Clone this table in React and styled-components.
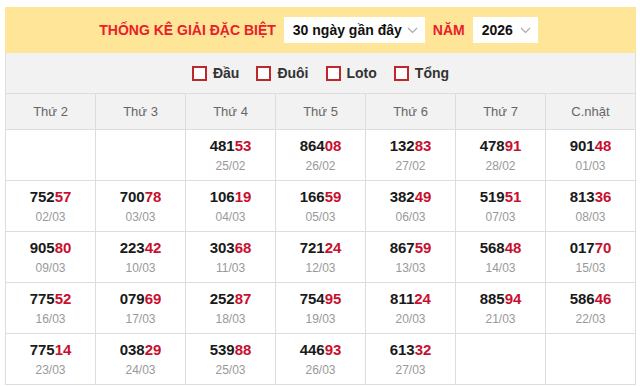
import React from "react";
import styled, { createGlobalStyle } from "styled-components";

const GlobalStyle = createGlobalStyle`
  body {
    margin: 0;
    background: #fff;
    font-family: "Liberation Sans", Arial, sans-serif;
  }
`;

const Wrapper = styled.div`
  width: 631px;
  margin: 7px 0 0 5px;
`;

const TitleBar = styled.div`
  height: 46px;
  background: #ffe598;
  display: flex;
  align-items: center;
  justify-content: center;
  gap: 8px;
  padding-right: 4px;
`;

const Title = styled.span`
  color: #e8202a;
  font-weight: bold;
  font-size: 14px;
`;

const Select = styled.div`
  height: 26px;
  width: ${(p) => p.w}px;
  box-sizing: border-box;
  background: #fff;
  display: flex;
  align-items: center;
  justify-content: space-between;
  padding: 0 7px 0 9px;
  font-size: 14px;
  font-weight: bold;
  color: #111;
`;

const FilterBar = styled.div`
  height: 40px;
  background: #f2f2f2;
  border-left: 1px solid #ddd;
  border-right: 1px solid #ddd;
  border-bottom: 1px solid #ddd;
  display: flex;
  align-items: center;
  justify-content: center;
  gap: 17px;
`;

const Check = styled.label`
  display: flex;
  align-items: center;
  gap: 6px;
  font-size: 14px;
  font-weight: bold;
  color: #333;
`;

const Box = styled.span`
  width: 15px;
  height: 15px;
  box-sizing: border-box;
  border: 2px solid #c0272d;
  background: #fff;
`;

const Grid = styled.div`
  display: grid;
  grid-template-columns: repeat(7, 90px);
  border-left: 1px solid #ddd;
`;

const HeadCell = styled.div`
  height: 35px;
  background: #f2f2f2;
  border-right: 1px solid #ddd;
  border-bottom: 1px solid #ddd;
  display: flex;
  align-items: center;
  justify-content: center;
  font-size: 13px;
  color: #666;
`;

const Cell = styled.div`
  height: 50px;
  border-right: 1px solid #ddd;
  border-bottom: 1px solid #ddd;
  display: flex;
  flex-direction: column;
  align-items: center;
  justify-content: center;
`;

const Num = styled.div`
  font-size: 15px;
  line-height: 18px;
  font-weight: bold;
  color: #1a1a1a;
  span {
    color: #c8102e;
  }
`;

const DateText = styled.div`
  font-size: 12px;
  line-height: 14px;
  margin-top: 4px;
  color: #999;
`;

const Chevron = () => (
  <svg width="11" height="7" viewBox="0 0 11 7">
    <path d="M1 1l4.5 4.5L10 1" fill="none" stroke="#aaa" strokeWidth="1.2" />
  </svg>
);

const days = ["Thứ 2", "Thứ 3", "Thứ 4", "Thứ 5", "Thứ 6", "Thứ 7", "C.nhật"];

const results = [
  null, null,
  ["48153", "25/02"], ["86408", "26/02"], ["13283", "27/02"], ["47891", "28/02"], ["90148", "01/03"],
  ["75257", "02/03"], ["70078", "03/03"], ["10619", "04/03"], ["16659", "05/03"], ["38249", "06/03"], ["51951", "07/03"], ["81336", "08/03"],
  ["90580", "09/03"], ["22342", "10/03"], ["30368", "11/03"], ["72124", "12/03"], ["86759", "13/03"], ["56848", "14/03"], ["01770", "15/03"],
  ["77552", "16/03"], ["07969", "17/03"], ["25287", "18/03"], ["75495", "19/03"], ["81124", "20/03"], ["88594", "21/03"], ["58646", "22/03"],
  ["77514", "23/03"], ["03829", "24/03"], ["53988", "25/03"], ["44693", "26/03"], ["61332", "27/03"], null, null,
];

const App = () => {
  return (
    <Wrapper>
      <GlobalStyle />
      <TitleBar>
        <Title>THỐNG KÊ GIẢI ĐẶC BIỆT</Title>
        <Select w={141}>
          30 ngày gần đây <Chevron />
        </Select>
        <Title>NĂM</Title>
        <Select w={65}>
          2026 <Chevron />
        </Select>
      </TitleBar>
      <FilterBar>
        {["Đầu", "Đuôi", "Loto", "Tổng"].map((t) => (
          <Check key={t}>
            <Box />
            {t}
          </Check>
        ))}
      </FilterBar>
      <Grid>
        {days.map((d) => (
          <HeadCell key={d}>{d}</HeadCell>
        ))}
        {results.map((r, i) => (
          <Cell key={i}>
            {r && (
              <>
                <Num>
                  {r[0].slice(0, 3)}
                  <span>{r[0].slice(3)}</span>
                </Num>
                <DateText>{r[1]}</DateText>
              </>
            )}
          </Cell>
        ))}
      </Grid>
    </Wrapper>
  );
};

export default App;
